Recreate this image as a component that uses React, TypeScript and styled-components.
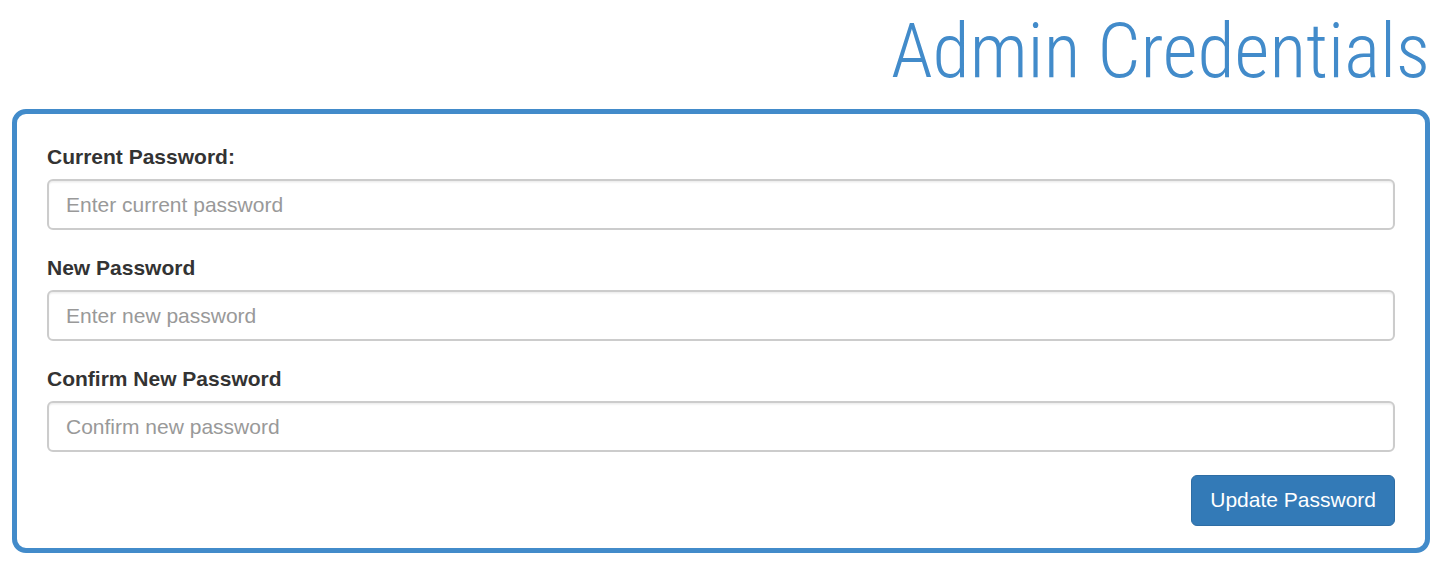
import React from "react";
import styled, { createGlobalStyle } from "styled-components";

const Global = createGlobalStyle`
  html, body { margin: 0; padding: 0; background: #ffffff; }
  body { font-family: "Liberation Sans", Arial, sans-serif; color: #333333; }
  * { box-sizing: border-box; }
`;

const Page = styled.div`
  padding: 0 14px 0 12px;
`;

const Title = styled.h1`
  margin: 10px 0 15px;
  text-align: right;
  font-family: Roboto, sans-serif;
  font-weight: 300;
  font-stretch: condensed;
  font-size: 76px;
  line-height: 1.1;
  color: #428bca;
`;

const Card = styled.form`
  border: 5px solid #428bca;
  border-radius: 14px;
  padding: 28px 30px 22px;
  display: flex;
  flex-direction: column;
`;

const Group = styled.div`
  display: flex;
  flex-direction: column;
  margin-bottom: 22.5px;
`;

const Label = styled.label`
  font-weight: 700;
  font-size: 21px;
  line-height: 30px;
  margin-bottom: 7.5px;
  color: #333333;
`;

const Input = styled.input`
  height: 51px;
  width: 100%;
  padding: 0 17px;
  border: 2px solid #cccccc;
  border-radius: 6px;
  font-family: "Liberation Sans", Arial, sans-serif;
  font-size: 21px;
  color: #555555;
  box-shadow: inset 0 1.5px 1.5px rgba(0, 0, 0, 0.075);
  outline: none;
  &::placeholder { color: #999999; }
`;

const Actions = styled.div`
  display: flex;
  justify-content: flex-end;
`;

const Button = styled.button`
  height: 51px;
  padding: 0 18px;
  background: #337ab7;
  border: 1.5px solid #2e6da4;
  border-radius: 6px;
  color: #ffffff;
  font-family: "Liberation Sans", Arial, sans-serif;
  font-size: 21px;
  cursor: pointer;
`;

const fields = [
  { id: "current", label: "Current Password:", placeholder: "Enter current password" },
  { id: "new", label: "New Password", placeholder: "Enter new password" },
  { id: "confirm", label: "Confirm New Password", placeholder: "Confirm new password" },
];

export default function App() {
  return (
    <Page>
      <Global />
      <Title>Admin Credentials</Title>
      <Card onSubmit={(e) => e.preventDefault()}>
        {fields.map((f) => (
          <Group key={f.id}>
            <Label htmlFor={f.id}>{f.label}</Label>
            <Input id={f.id} type="password" placeholder={f.placeholder} />
          </Group>
        ))}
        <Actions>
          <Button type="submit">Update Password</Button>
        </Actions>
      </Card>
    </Page>
  );
}
